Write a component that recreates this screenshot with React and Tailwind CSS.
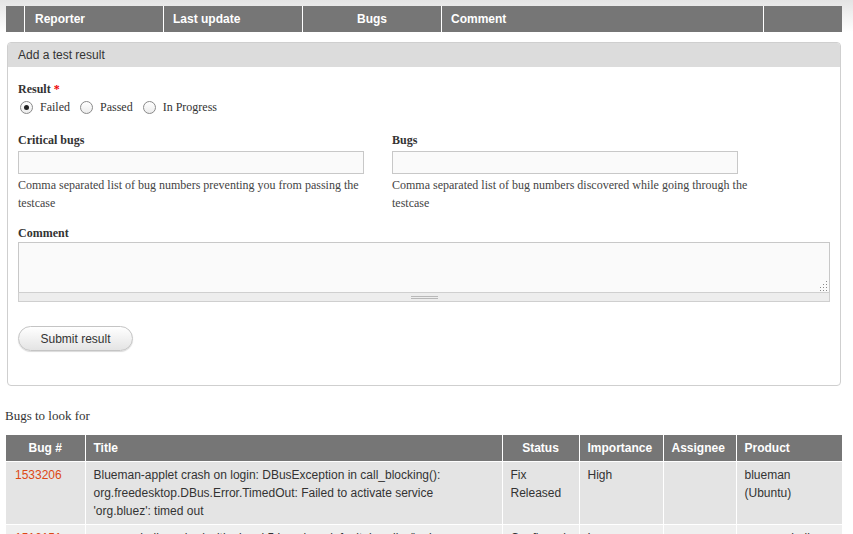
import React from "react";

const serif = "font-['Liberation_Serif',serif]";
const sans = "font-['Liberation_Sans',Arial,sans-serif]";

const topCols = [
  { label: "", w: "w-[18px]", align: "" },
  { label: "Reporter", w: "w-[138px]", align: "text-left pl-[10px]" },
  { label: "Last update", w: "w-[138px]", align: "text-left pl-[9px]" },
  { label: "Bugs", w: "w-[138px]", align: "text-center" },
  { label: "Comment", w: "w-[321px]", align: "text-left pl-[9px]" },
  { label: "", w: "flex-1", align: "" },
];

const bugCols = [
  { label: "Bug #", w: "w-[79px]", head: "text-center" },
  { label: "Title", w: "w-[417px]", head: "text-left pl-[8px]" },
  { label: "Status", w: "w-[77px]", head: "text-center" },
  { label: "Importance", w: "w-[84px]", head: "text-left pl-[8px]" },
  { label: "Assignee", w: "w-[73px]", head: "text-left pl-[8px]" },
  { label: "Product", w: "w-[106px]", head: "text-left pl-[8px]" },
];

const bugs = [
  {
    id: "1533206",
    title: [
      "Blueman-applet crash on login: DBusException in call_blocking():",
      "org.freedesktop.DBus.Error.TimedOut: Failed to activate service",
      "'org.bluez': timed out",
    ],
    status: ["Fix", "Released"],
    importance: "High",
    assignee: "",
    product: ["blueman", "(Ubuntu)"],
    bg: "bg-[#e4e4e4]",
  },
  {
    id: "1516151",
    title: ["gnome-shell crashed with signal 5 in g_log_default_handler() when"],
    status: ["Confirmed"],
    importance: "Low",
    assignee: "",
    product: ["gnome-shell"],
    bg: "bg-[#efefef]",
  },
];

function Radio({ checked, label }) {
  return (
    <label className="flex items-center gap-[7px]">
      <span className="w-[13px] h-[13px] rounded-full border border-[#8a8a8a] bg-gradient-to-b from-white to-[#ececec] flex items-center justify-center">
        {checked && <span className="w-[5px] h-[5px] rounded-full bg-[#222]" />}
      </span>
      <span>{label}</span>
    </label>
  );
}

function Field({ label, help }) {
  return (
    <div className="w-[356px]">
      <div className="font-bold h-[18px] leading-[18px]">{label}</div>
      <div className="mt-[2px] w-[346px] h-[23px] border border-[#c8c8c8] bg-[#fafafa]" />
      <p className="mt-[2px] leading-[18px] text-[#444]">{help}</p>
    </div>
  );
}

export default function App() {
  return (
    <div className={`w-[853px] h-[534px] overflow-hidden bg-white text-[#333] ${serif} text-[12px]`}>
      <div className="bg-gradient-to-b from-[#e4e4e4] to-white pt-[6px]">
        {/* Results table header */}
        <div className={`ml-[6px] w-[836px] h-[26px] flex gap-px bg-white ${sans} text-[12px] font-bold text-white`}>
          {topCols.map((c, i) => (
            <div key={i} className={`${c.w} bg-[#767676] leading-[26px] ${c.align}`}>
              {c.label}
            </div>
          ))}
        </div>
      </div>

      {/* Add a test result */}
      <div className="ml-[7px] mt-[10px] w-[834px] border border-[#cfcfcf] rounded-[4px]">
        <div className={`h-[24px] bg-[#dcdcdc] rounded-t-[3px] pl-[10px] leading-[24px] ${sans} text-[12px] text-[#333]`}>
          Add a test result
        </div>
        <div className="px-[10px] pt-[13px] pb-[34px]">
          <div className="font-bold h-[18px] leading-[18px]">
            Result <span className="text-[#e00]">*</span>
          </div>
          <div className="h-[18px] flex items-center gap-[10px] pl-[2px]">
            <Radio checked label="Failed" />
            <Radio label="Passed" />
            <Radio label="In Progress" />
          </div>

          <div className="mt-[15px] flex gap-[18px]">
            <Field
              label="Critical bugs"
              help="Comma separated list of bug numbers preventing you from passing the testcase"
            />
            <Field
              label="Bugs"
              help="Comma separated list of bug numbers discovered while going through the testcase"
            />
          </div>

          <div className="mt-[12px] font-bold h-[18px] leading-[18px]">Comment</div>
          <div className="w-[812px]">
            <div className="relative h-[50px] border border-[#c8c8c8] border-b-0 bg-[#fafafa]">
              <svg className="absolute right-[1px] bottom-[1px]" width="10" height="10" viewBox="0 0 10 10">
                <g fill="#888">
                  <rect x="8" y="0" width="1" height="1" />
                  <rect x="8" y="3" width="1" height="1" />
                  <rect x="5" y="3" width="1" height="1" />
                  <rect x="8" y="6" width="1" height="1" />
                  <rect x="5" y="6" width="1" height="1" />
                  <rect x="2" y="6" width="1" height="1" />
                  <rect x="8" y="9" width="1" height="1" />
                  <rect x="5" y="9" width="1" height="1" />
                  <rect x="2" y="9" width="1" height="1" />
                </g>
              </svg>
            </div>
            <div className="h-[10px] border border-[#cfcfcf] bg-[#ededed] flex flex-col items-center justify-center gap-[1px]">
              <span className="w-[27px] h-px bg-[#b8b8b8]" />
              <span className="w-[27px] h-px bg-[#b8b8b8]" />
            </div>
          </div>

          <button
            className={`mt-[24px] w-[115px] h-[25px] rounded-full border border-[#c4c4c4] bg-gradient-to-b from-white to-[#e4e4e4] shadow-[0_1px_1px_rgba(0,0,0,0.15)] ${sans} text-[12px] text-[#333]`}
          >
            Submit result
          </button>
        </div>
      </div>

      {/* Bugs to look for */}
      <div className="ml-[5px] mt-[21px] text-[13px] leading-[18px] text-[#333]">Bugs to look for</div>

      <table className={`ml-[6px] mt-[10px] w-[836px] table-fixed border-collapse ${sans} text-[12px]`}>
        <thead>
          <tr className="bg-[#767676] text-white font-bold h-[26px]">
            {bugCols.map((c, i) => (
              <th
                key={c.label}
                className={`${c.w} ${c.head} p-0 leading-[26px] font-bold ${i > 0 ? "border-l border-white" : ""}`}
              >
                {c.label}
              </th>
            ))}
          </tr>
        </thead>
        <tbody>
          {bugs.map((b) => (
            <tr key={b.id} className={`${b.bg} align-top border-t border-white text-[#333]`}>
              <td className="pl-[9px] pr-[8px] py-[4px] leading-[18px] text-[#dd4814]">{b.id}</td>
              <td className="border-l border-white px-[8px] py-[4px] leading-[18px]">
                {b.title.map((t, i) => (
                  <div key={i} className="whitespace-nowrap">{t}</div>
                ))}
              </td>
              <td className="border-l border-white px-[8px] py-[4px] leading-[18px]">
                {b.status.map((t, i) => (
                  <div key={i}>{t}</div>
                ))}
              </td>
              <td className="border-l border-white px-[8px] py-[4px] leading-[18px]">{b.importance}</td>
              <td className="border-l border-white px-[8px] py-[4px] leading-[18px]">{b.assignee}</td>
              <td className="border-l border-white px-[8px] py-[4px] leading-[18px]">
                {b.product.map((t, i) => (
                  <div key={i}>{t}</div>
                ))}
              </td>
            </tr>
          ))}
        </tbody>
      </table>
    </div>
  );
}
